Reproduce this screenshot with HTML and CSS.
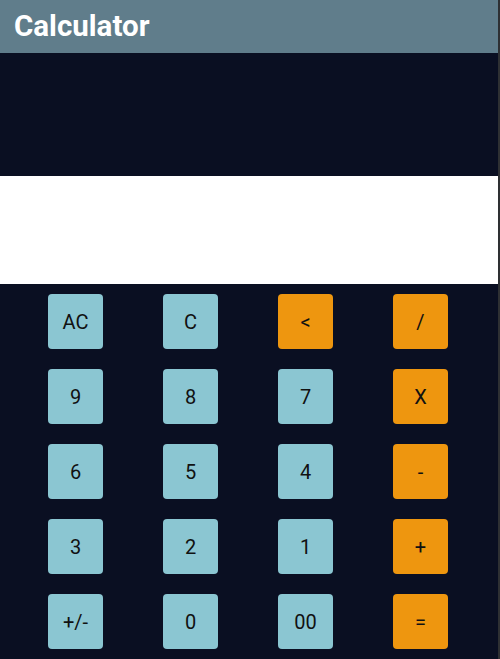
FILE: index.html
```html
<!DOCTYPE html>
<html>
<head>
<meta charset="utf-8">
<link rel="stylesheet" href="styles.css">
</head>
<body>
<div class="app">
  <header class="bar"><h1 class="title">Calculator</h1></header>
  <div class="history"></div>
  <div class="display"></div>
  <div class="keys">
    <button class="key">AC</button>
    <button class="key">C</button>
    <button class="key op">&lt;</button>
    <button class="key op">/</button>
    <button class="key">9</button>
    <button class="key">8</button>
    <button class="key">7</button>
    <button class="key op">X</button>
    <button class="key">6</button>
    <button class="key">5</button>
    <button class="key">4</button>
    <button class="key op">-</button>
    <button class="key">3</button>
    <button class="key">2</button>
    <button class="key">1</button>
    <button class="key op">+</button>
    <button class="key">+/-</button>
    <button class="key">0</button>
    <button class="key">00</button>
    <button class="key op">=</button>
  </div>
</div>
</body>
</html>
```
FILE: styles.css
```css
html, body {
  margin: 0;
  padding: 0;
  height: 100%;
  overflow: hidden;
}
body {
  background: #2e3033;
  font-family: Roboto, "Liberation Sans", sans-serif;
}
.app {
  width: 498px;
  height: 659px;
  background: #0a0f22;
  display: flex;
  flex-direction: column;
}
.bar {
  height: 53px;
  background: #607d8b;
  display: flex;
  align-items: center;
  padding-left: 14px;
  padding-top: 1px;
  box-sizing: border-box;
}
.title {
  margin: 0;
  color: #fff;
  font-size: 29.5px;
  font-weight: 700;
  line-height: 1;
}
.history {
  height: 123px;
  background: #0a0f22;
}
.display {
  height: 108px;
  background: #fff;
}
.keys {
  display: grid;
  grid-template-columns: repeat(4, 115px);
  grid-auto-rows: 55px;
  row-gap: 20px;
  padding: 10px 0 0 18px;
  justify-items: center;
}
.key {
  width: 55px;
  height: 55px;
  border: none;
  border-radius: 4px;
  background: #8bc6d2;
  color: #111;
  font-family: Roboto, "Liberation Sans", sans-serif;
  font-size: 20px;
  font-weight: 400;
  padding: 0;
  margin: 0;
}
.key.op {
  background: #ee960f;
}
```
